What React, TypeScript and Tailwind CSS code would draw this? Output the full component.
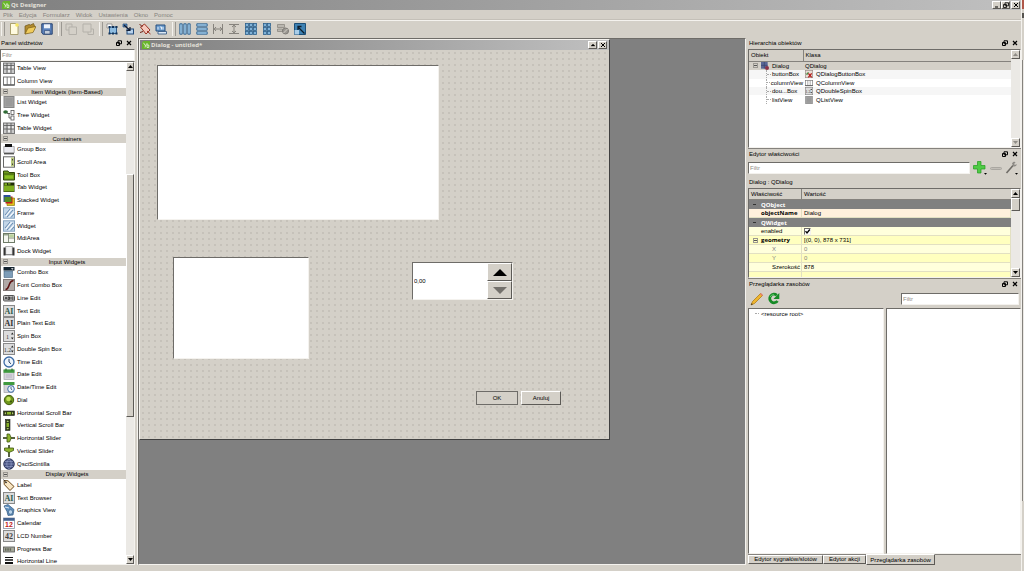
import { useState } from "react";
import type { ReactNode } from "react";

type WidgetGroup = { title?: string; items: { label: string; icon: ReactNode }[] };

const raised = "border border-t-white border-l-white border-r-[#5c5a56] border-b-[#5c5a56] bg-[#d4d0c8]";
const sunken = "border border-t-[#6e6c68] border-l-[#6e6c68] border-r-[#f4f2ee] border-b-[#f4f2ee] bg-white";

function Svg({ children, size = "w-3 h-3" }: { children: ReactNode; size?: string }) {
  return (
    <svg className={`${size} block shrink-0`} viewBox="0 0 12 12" fill="none" aria-hidden="true">
      {children}
    </svg>
  );
}

/* ---------- widget box icons ---------- */

const tile = <rect x=".5" y=".5" width="11" height="11" fill="#dcdcdc" stroke="#8a8a8a" />;

const tableIcon = (
  <Svg>
    <rect x=".5" y="1" width="11" height="10.5" fill="#c9c9c9" stroke="#777" />
    <path d="M1 3.5h10M1 7h10M4 1v10M8 1v10" stroke="#555" strokeWidth=".8" />
    <path d="M5 4.3h2v2H5zM9 4.3h1.6v2H9zM5 8h2v2H5z" fill="#eee" />
  </Svg>
);

const columnIcon = (
  <Svg>
    <rect x=".5" y="2" width="11" height="8" fill="#fff" stroke="#777" />
    <path d="M4.2 2v8M7.8 2v8" stroke="#777" strokeWidth=".9" />
    <path d="M.5 10h11" stroke="#555" strokeWidth="1.2" />
  </Svg>
);

const listIcon = (
  <Svg>
    <rect x="1" y=".5" width="10" height="11" fill="#a4a4a4" stroke="#858585" />
    <path d="M2.5 3h7M2.5 5h7M2.5 7h7M2.5 9h7" stroke="#8b8b8b" strokeWidth=".8" />
  </Svg>
);

const treeIcon = (
  <Svg>
    <ellipse cx="2.6" cy="3" rx="2.4" ry="1.7" fill="#2f6a35" />
    <path d="M4 4.5h3M6 4v5h2" stroke="#444" strokeWidth=".8" />
    <rect x="8" y="1.5" width="3" height="4" fill="#fff" stroke="#555" strokeWidth=".8" />
    <rect x="8" y="7" width="3" height="4" fill="#fff" stroke="#555" strokeWidth=".8" />
  </Svg>
);

const groupBoxIcon = (
  <Svg>
    <path d="M.8 3.5h10.4v6.5H.8z" fill="#e9e9ef" stroke="#999" strokeWidth=".8" />
    <path d="M1 10.6h10" stroke="#555" strokeWidth="1.6" />
    <path d="M2 1h7v3H2z" fill="#111" />
  </Svg>
);

const scrollAreaIcon = (
  <Svg>
    <rect x=".5" y=".8" width="11" height="10.4" fill="#fff" stroke="#666" />
    <path d="M8 1.5h3v9H8z" fill="#b9c77c" />
    <path d="M9.5 3v1.5M9.5 7.5V9" stroke="#444" />
  </Svg>
);

const folderIcon = (
  <Svg>
    <path d="M.5 2h4.5l1 1.5h5.5v7.5H.5z" fill="#6f9d1c" stroke="#31470b" />
    <path d="M1 5h10" stroke="#31470b" strokeWidth=".8" />
    <path d="M2 6.5h8v3H2z" fill="#8abf22" />
  </Svg>
);

const tabIcon = (
  <Svg>
    <path d="M.5 4V1.5H11.5v9.5H.5z" fill="#1f2c08" />
    <path d="M1 4.5h10v6H1z" fill="#7fae20" />
    <path d="M1.5 2.2h2.5v2H1.5zM5 2.2h2.5v1.3H5z" fill="#7fae20" />
  </Svg>
);

const stackedIcon = (
  <Svg>
    <path d="M4 4h7.5v7.5H4z" fill="#e0c21c" stroke="#7d6a00" strokeWidth=".6" />
    <path d="M2.5 2.5h7v7h-7z" fill="#bd1d1d" />
    <path d="M.5 1h7v7h-7z" fill="#2c4f96" />
    <path d="M1.5 3h7v5h-7z" fill="#528d22" />
  </Svg>
);

const frameIcon = (
  <Svg>
    <rect x=".5" y=".8" width="11" height="10.4" fill="#c3d6e8" stroke="#86a3bf" />
    <path d="M2 8l5-6M4 10l6-7M8 10.5l3-3.5" stroke="#6a8cb0" />
    <path d="M3 9l5.5-7M6 10.5l5-6" stroke="#fff" />
  </Svg>
);

const mdiIcon = (
  <Svg>
    <rect x=".5" y="1.5" width="11" height="9" fill="#f4f6ef" stroke="#6d7a66" />
    <path d="M5.5 1.5v9M5.5 6h6" stroke="#6d7a66" strokeWidth=".8" />
    <path d="M6.2 2.3h4.6v3H6.2z" fill="#b9d19b" />
    <path d="M1 2h4v1.5H1z" fill="#98a790" />
  </Svg>
);

const dockIcon = (
  <Svg>
    <path d="M.5 2.5h11v8H.5z" fill="#333" />
    <rect x="2.8" y="1.5" width="6.4" height="8" fill="#f1f1f1" stroke="#888" strokeWidth=".6" />
    <path d="M2.5 10.5h7" stroke="#ddd" />
  </Svg>
);

const comboIcon = (
  <Svg>
    <path d="M.5 1h11v3.6H.5z" fill="#14232f" />
    <path d="M8 2.2h2.6L9.3 3.8z" fill="#fff" />
    <path d="M1 5h8.5v6.5H1z" fill="#7e9db8" stroke="#476581" strokeWidth=".6" />
  </Svg>
);

const fontComboIcon = (
  <Svg>
    <rect x=".5" y=".5" width="11" height="11" fill="#b1a9a7" stroke="#837b79" />
    <path d="M2.5 10.5c2.5 0 3-3 4-5.5S8.5 1.5 10.5 1.8" stroke="#5b0f0f" strokeWidth="1.5" />
  </Svg>
);

const lineEditIcon = (
  <Svg>
    <rect x=".5" y="3.5" width="11" height="5.5" rx="1" fill="#bbb" stroke="#555" />
    <path d="M2 7.5l1-2.5 1 2.5M5.2 5v2.5h1.3V5zM8 5v2.5M9.8 4.5v3.5" stroke="#222" strokeWidth=".8" />
  </Svg>
);

function LetterIcon({ text, fill = "#333" }: { text: string; fill?: string }) {
  return (
    <Svg>
      {tile}
      <text x="6" y="9" textAnchor="middle" fontSize="8" fontWeight="700" fontFamily="Liberation Serif, serif" fill={fill}>
        {text}
      </text>
    </Svg>
  );
}

function SpinIcon({ text }: { text: string }) {
  return (
    <Svg>
      {tile}
      <text x="4.5" y="8.5" textAnchor="middle" fontSize="6" fontFamily="Liberation Serif, serif" fill="#333">
        {text}
      </text>
      <path d="M8 4.5l1.3-2 1.3 2zM8 7.5l1.3 2 1.3-2z" fill="#222" />
    </Svg>
  );
}

const clockIcon = (
  <Svg>
    <circle cx="6" cy="6" r="5" fill="#eef5fc" stroke="#3c6ba5" strokeWidth="1.3" />
    <path d="M6 2.8V6l2 1.8" stroke="#28456b" />
  </Svg>
);

const dateIcon = (
  <Svg>
    <rect x="1" y="2" width="10" height="9.5" fill="#d4d4d8" stroke="#a2a2a8" strokeWidth=".7" />
    <path d="M.5 1.5h11v3.3H.5z" fill="#3f9a3f" />
    <path d="M3 .5v2M9 .5v2" stroke="#1e5a1e" />
    <path d="M3 7h6M3 9h6" stroke="#b3a9c4" strokeWidth=".8" />
  </Svg>
);

const dateTimeIcon = (
  <Svg>
    <rect x="1" y="2" width="9" height="9.5" fill="#d4d4d8" stroke="#a2a2a8" strokeWidth=".7" />
    <path d="M.5 1h11v3H.5z" fill="#3f9a3f" />
    <circle cx="8" cy="8" r="3.3" fill="#eef5fc" stroke="#3c6ba5" />
    <path d="M8 6v2l1.3 1" stroke="#28456b" strokeWidth=".8" />
  </Svg>
);

const dialIcon = (
  <Svg>
    <circle cx="6" cy="6" r="4.7" fill="#6e961b" stroke="#435c0e" />
    <circle cx="5.5" cy="5" r="2.3" fill="#bfdf55" />
    <circle cx="8" cy="7.5" r="1" fill="#38500a" />
  </Svg>
);

const hScrollIcon = (
  <Svg>
    <rect x=".5" y="4" width="11" height="4.5" fill="#334016" stroke="#222" strokeWidth=".6" />
    <path d="M4 5h4v2.5H4z" fill="#88b02a" />
    <path d="M3 5L1.5 6.2 3 7.5zM9 5l1.5 1.2L9 7.5z" fill="#b9cf7c" />
  </Svg>
);

const vScrollIcon = (
  <Svg>
    <rect x="2.5" y=".5" width="4.5" height="11" fill="#334016" stroke="#222" strokeWidth=".6" />
    <path d="M3.5 4H6v4H3.5z" fill="#88b02a" />
    <path d="M3.5 3l1.2-1.5L6 3zM3.5 9l1.2 1.5L6 9z" fill="#b9cf7c" />
  </Svg>
);

const hSliderIcon = (
  <Svg>
    <path d="M0 6h12" stroke="#2c3b12" strokeWidth="1.6" />
    <path d="M4 2h2.5l1.8 4-1.8 4H4z" fill="#8fb52e" stroke="#3f5510" strokeWidth=".8" />
  </Svg>
);

const vSliderIcon = (
  <Svg>
    <path d="M6 0v12" stroke="#2c3b12" strokeWidth="1.6" />
    <path d="M1.5 3h9v2.5L6 7.5 1.5 5.5z" fill="#8fb52e" stroke="#3f5510" strokeWidth=".8" />
  </Svg>
);

const scintillaIcon = (
  <Svg>
    <circle cx="6" cy="6" r="5.3" fill="#47527f" stroke="#222a4d" strokeWidth=".8" />
    <path d="M1 6h10M6 1c-3 3-3 7 0 10M6 1c3 3 3 7 0 10M2 3.5h8M2 8.5h8" stroke="#9aa4cc" strokeWidth=".6" />
  </Svg>
);

const labelIcon = (
  <Svg>
    <path d="M1 1.5l4 .3 6 5.7-4 4L1.3 5.5z" fill="#f7e5c3" stroke="#6b4716" />
    <circle cx="3" cy="3.5" r=".8" fill="#222" />
    <path d="M.5 .5l2.5 3" stroke="#222" strokeWidth=".8" />
  </Svg>
);

const graphicsIcon = (
  <Svg>
    <path d="M1 2l4-1.5 6 5-1 5.5-5 .5-1-4z" fill="#5f8fbd" stroke="#33597f" strokeWidth=".7" />
    <circle cx="7.5" cy="8" r="2.2" fill="#b8d3ea" stroke="#33597f" strokeWidth=".6" />
    <path d="M2 3l4 1" stroke="#dbe9f5" />
  </Svg>
);

const calendarIcon = (
  <Svg>
    <rect x=".5" y="1" width="11" height="10.5" fill="#fff" stroke="#8b93a5" strokeWidth=".8" />
    <path d="M.5 1h11v2.8H.5z" fill="#43628f" />
    <text x="6" y="10.3" textAnchor="middle" fontSize="7" fontWeight="700" fontFamily="Liberation Sans, sans-serif" fill="#c01818">
      12
    </text>
  </Svg>
);

const progressIcon = (
  <Svg>
    <rect x=".5" y="4" width="11" height="5" fill="#a5a89a" stroke="#555" strokeWidth=".8" />
    <path d="M2 5.2h1.5v2.6H2zM4.3 5.2h1.5v2.6H4.3zM6.6 5.2h1.5v2.6H6.6z" fill="#62665a" />
  </Svg>
);

const hLineIcon = (
  <Svg>
    <path d="M2 2.5h8" stroke="#111" strokeWidth="1" />
    <path d="M2 5h8" stroke="#111" strokeWidth="1.5" />
    <path d="M2 8h8" stroke="#111" strokeWidth="2" />
  </Svg>
);

const widgetGroups: WidgetGroup[] = [
  {
    items: [
      { label: "Table View", icon: tableIcon },
      { label: "Column View", icon: columnIcon },
    ],
  },
  {
    title: "Item Widgets (Item-Based)",
    items: [
      { label: "List Widget", icon: listIcon },
      { label: "Tree Widget", icon: treeIcon },
      { label: "Table Widget", icon: tableIcon },
    ],
  },
  {
    title: "Containers",
    items: [
      { label: "Group Box", icon: groupBoxIcon },
      { label: "Scroll Area", icon: scrollAreaIcon },
      { label: "Tool Box", icon: folderIcon },
      { label: "Tab Widget", icon: tabIcon },
      { label: "Stacked Widget", icon: stackedIcon },
      { label: "Frame", icon: frameIcon },
      { label: "Widget", icon: frameIcon },
      { label: "MdiArea", icon: mdiIcon },
      { label: "Dock Widget", icon: dockIcon },
    ],
  },
  {
    title: "Input Widgets",
    items: [
      { label: "Combo Box", icon: comboIcon },
      { label: "Font Combo Box", icon: fontComboIcon },
      { label: "Line Edit", icon: lineEditIcon },
      { label: "Text Edit", icon: <LetterIcon text="AI" fill="#2f5a4c" /> },
      { label: "Plain Text Edit", icon: <LetterIcon text="AI" /> },
      { label: "Spin Box", icon: <SpinIcon text="1" /> },
      { label: "Double Spin Box", icon: <SpinIcon text="1.2" /> },
      { label: "Time Edit", icon: clockIcon },
      { label: "Date Edit", icon: dateIcon },
      { label: "Date/Time Edit", icon: dateTimeIcon },
      { label: "Dial", icon: dialIcon },
      { label: "Horizontal Scroll Bar", icon: hScrollIcon },
      { label: "Vertical Scroll Bar", icon: vScrollIcon },
      { label: "Horizontal Slider", icon: hSliderIcon },
      { label: "Vertical Slider", icon: vSliderIcon },
      { label: "QsciScintilla", icon: scintillaIcon },
    ],
  },
  {
    title: "Display Widgets",
    items: [
      { label: "Label", icon: labelIcon },
      { label: "Text Browser", icon: <LetterIcon text="AI" fill="#2f5a4c" /> },
      { label: "Graphics View", icon: graphicsIcon },
      { label: "Calendar", icon: calendarIcon },
      { label: "LCD Number", icon: <LetterIcon text="42" fill="#444" /> },
      { label: "Progress Bar", icon: progressIcon },
      { label: "Horizontal Line", icon: hLineIcon },
    ],
  },
];

/* ---------- toolbar ---------- */

const dotGrid = (cols: number[]) => (
  <Svg>
    {cols.map((x) =>
      [0.5, 4.5, 8.5].map((y) => (
        <rect key={`${x}-${y}`} x={x} y={y} width="3" height="3" fill="#7fb2d8" stroke="#2b5f8c" strokeWidth=".8" />
      ))
    )}
  </Svg>
);

const toolGroups: { width: string; tools: { name: string; icon: ReactNode }[] }[] = [
  {
    width: "w-[49px]",
    tools: [
      {
        name: "Nowy",
        icon: (
          <Svg>
            <path d="M2.5 .5h5l2.5 2.5v8.5H2.5z" fill="#fffbe0" stroke="#9b8f55" strokeWidth=".8" />
            <circle cx="9" cy="2" r="1.8" fill="#f5e663" />
          </Svg>
        ),
      },
      {
        name: "Otwórz",
        icon: (
          <Svg>
            <path d="M1 11V3l4-1.5L6.5 2l3-1.5L10.5 3v3z" fill="#b08a2e" stroke="#6d5417" strokeWidth=".7" />
            <path d="M1 11l3-6 8-1.5-3 6z" fill="#f0cb5c" stroke="#7a5e1a" strokeWidth=".7" />
          </Svg>
        ),
      },
      {
        name: "Zapisz",
        icon: (
          <Svg>
            <path d="M.8 .8h10.4v10.4H2L.8 10z" fill="#5d83bd" stroke="#25406e" />
            <path d="M3 1.3h6v4H3z" fill="#eef3fa" />
            <path d="M3.5 7.5h5.5V11H3.5z" fill="#c3cddb" stroke="#25406e" strokeWidth=".6" />
          </Svg>
        ),
      },
    ],
  },
  {
    width: "w-[33px]",
    tools: [
      {
        name: "Przesuń na wierzch",
        icon: (
          <Svg>
            <path d="M1 1h6v6H1z" stroke="#b4b1aa" />
            <path d="M4 4h7.5v7.5H4z" fill="#d4d0c8" stroke="#b4b1aa" />
          </Svg>
        ),
      },
      {
        name: "Przesuń na spód",
        icon: (
          <Svg>
            <path d="M6 6h5.5v5.5H6z" stroke="#b4b1aa" />
            <path d="M1 1h8v8H1z" fill="#d4d0c8" stroke="#b4b1aa" />
          </Svg>
        ),
      },
    ],
  },
  {
    width: "w-[65px]",
    tools: [
      {
        name: "Edycja widżetów",
        icon: (
          <Svg>
            <path d="M1 1h5v4H1z" fill="#fff" stroke="#777" strokeWidth=".7" />
            <rect x="3.5" y="4" width="7" height="6.5" fill="#8ebce0" stroke="#2c5b8c" />
            <path d="M2.5 3h2v2h-2zM9.5 3h2v2h-2zM2.5 9.5h2v2h-2zM9.5 9.5h2v2h-2zM6 3h2v2H6zM6 9.5h2v2H6z" fill="#123257" />
          </Svg>
        ),
      },
      {
        name: "Edycja sygnałów/slotów",
        icon: (
          <Svg>
            <path d="M1 1h4v3H1z" fill="#5e8fc4" stroke="#234a7a" strokeWidth=".7" />
            <rect x="5" y="6" width="6.5" height="5" fill="#b7d2ec" stroke="#234a7a" />
            <path d="M2 2l5.5 5M8 4v3.5H4.5" stroke="#111c33" strokeWidth="1.2" />
          </Svg>
        ),
      },
      {
        name: "Edycja skojarzonych etykiet",
        icon: (
          <Svg>
            <path d="M1.5 4l4-3L11 7l-4 4z" fill="#f5c9bd" stroke="#9b3222" />
            <path d="M1 9.5l3-1M.5 1l3 3" stroke="#6d1d12" />
            <path d="M8 8l3.5 3" stroke="#9b3222" />
          </Svg>
        ),
      },
      {
        name: "Edycja kolejności tabulacji",
        icon: (
          <Svg>
            <path d="M1 2h9v6H1z" fill="#6f9fd0" stroke="#28507f" />
            <path d="M3 8.5h8.5V11H3z" fill="#dce8f4" stroke="#28507f" strokeWidth=".8" />
            <path d="M3 4v2.5M5 4h1.5v2.5M8 4v2.5" stroke="#fff" strokeWidth=".8" />
          </Svg>
        ),
      },
    ],
  },
  {
    width: "w-[131px]",
    tools: [
      {
        name: "Rozmieść poziomo",
        icon: (
          <Svg>
            <path d="M.8 .8h2.4v10.4H.8zM4.8 .8h2.4v10.4H4.8zM8.8 .8h2.4v10.4H8.8z" fill="#a5cfee" stroke="#2b5f8c" strokeWidth=".9" />
          </Svg>
        ),
      },
      {
        name: "Rozmieść pionowo",
        icon: (
          <Svg>
            <path d="M.8 .8h10.4v2.4H.8zM.8 4.8h10.4v2.4H.8zM.8 8.8h10.4v2.4H.8z" fill="#a5cfee" stroke="#2b5f8c" strokeWidth=".9" />
          </Svg>
        ),
      },
      {
        name: "Rozmieść poziomo w splitterze",
        icon: (
          <Svg>
            <path d="M1.5 1v10M10.5 1v10M2 6h8M4 4L2.2 6 4 8M8 4l1.8 2L8 8" stroke="#86837d" />
          </Svg>
        ),
      },
      {
        name: "Rozmieść pionowo w splitterze",
        icon: (
          <Svg>
            <path d="M1 1.5h10M1 10.5h10M6 2v8M4 4l2-1.8L8 4M4 8l2 1.8L8 8" stroke="#86837d" />
          </Svg>
        ),
      },
      { name: "Rozmieść w siatce", icon: dotGrid([0.5, 4.5, 8.5]) },
      { name: "Rozmieść w formularzu", icon: dotGrid([2.5, 6.5]) },
      {
        name: "Usuń rozmieszczenie",
        icon: (
          <Svg>
            <path d="M.5 1.5h7v3h-7zM.5 6h5v2.5h-5z" fill="#bab7b0" stroke="#8b8882" strokeWidth=".8" />
            <circle cx="8.5" cy="8" r="3" fill="#9c9993" stroke="#7d7a75" />
            <path d="M6.5 10l4-4" stroke="#d4d0c8" />
          </Svg>
        ),
      },
      {
        name: "Dopasuj rozmiar",
        icon: (
          <Svg>
            <path d="M.5 .5h11v11H.5z" fill="#3f82b3" stroke="#1c4f78" />
            <path d="M.5 7h4.5v4.5H.5z" fill="#a9cde8" />
            <path d="M10.5 10.5L4 4M4 7V3.5h3.5" stroke="#0d1d2c" strokeWidth="1.3" />
          </Svg>
        ),
      },
    ],
  },
];

const menus = ["Plik", "Edycja", "Formularz", "Widok", "Ustawienia", "Okno", "Pomoc"];

function QtLogo() {
  return (
    <svg className="w-2 h-2 block shrink-0" viewBox="0 0 8 8" fill="none" aria-hidden="true">
      <path d="M1.5 0H8v6.5L6.5 8H0V1.5z" fill="#69b52b" />
      <path d="M1.5 1.8l2 3 .8-1.5M3.5 4.8L3 6.5M5 2v4.5M5 4h1.8v2.5H5" stroke="#e9f5dc" strokeWidth=".8" />
    </svg>
  );
}

function WindowButton({ kind }: { kind: "min" | "restore" | "close" | "up" }) {
  return (
    <button aria-label={kind} className={`flex h-[8px] w-[9px] items-center justify-center ${raised}`}>
      <svg className="w-[6px] h-[6px]" viewBox="0 0 6 6" fill="none" stroke="#000">
        {kind === "min" && <path d="M1 5h3" />}
        {kind === "restore" && <path d="M2 .8h3.5v3H2zM.5 2.5h3v3h-3z" strokeWidth=".8" />}
        {kind === "close" && <path d="M1 1l4 4M5 1L1 5" />}
        {kind === "up" && <path d="M1 4l2-2 2 2z" fill="#000" strokeWidth=".3" />}
      </svg>
    </button>
  );
}

function DockTitle({ title }: { title: string }) {
  return (
    <div className="flex h-[10px] shrink-0 items-center justify-between pl-px pr-[3px]">
      <h2>{title}</h2>
      <div className="flex gap-[4px]">
        <button aria-label="Odczep">
          <svg className="block w-[6px] h-[6px]" viewBox="0 0 6 6" fill="none" stroke="#000">
            <path d="M2 .8h3.5v3H2zM.5 2.5h3v3h-3z" />
          </svg>
        </button>
        <button aria-label="Zamknij">
          <svg className="block w-[6px] h-[6px]" viewBox="0 0 6 6" fill="none" stroke="#000">
            <path d="M1 1l4 4M5 1L1 5" strokeWidth="1.2" />
          </svg>
        </button>
      </div>
    </div>
  );
}

function ArrowButton({ dir, disabled = false }: { dir: "up" | "down"; disabled?: boolean }) {
  return (
    <button aria-label={dir} disabled={disabled} className={`flex h-[9px] w-full shrink-0 items-center justify-center ${raised}`}>
      <svg className="w-[5px] h-[3px]" viewBox="0 0 5 3" fill={disabled ? "#8f8c86" : "#000"}>
        <path d={dir === "up" ? "M0 3L2.5 0 5 3z" : "M0 0h5L2.5 3z"} />
      </svg>
    </button>
  );
}

function Expander() {
  return (
    <button aria-label="Zwiń" className="flex h-[5px] w-[5px] shrink-0 items-center justify-center border border-[#9b9892]">
      <span className="h-px w-[3px] bg-[#555]" />
    </button>
  );
}

function WidgetBox() {
  const [filter, setFilter] = useState("");
  return (
    <aside className="flex w-[138px] shrink-0 flex-col border-r border-[#f4f2ee] pr-[2px]">
      <DockTitle title="Panel widżetów" />
      <input
        aria-label="Filtr widżetów"
        placeholder="Filtr"
        value={filter}
        onChange={(e) => setFilter(e.target.value)}
        className={`mt-px h-[12px] w-full shrink-0 px-px placeholder:text-[#8f8c86] ${sunken}`}
      />
      <div className={`flex min-h-0 flex-1 overflow-hidden ${sunken}`}>
        <div className="min-w-0 flex-1 overflow-hidden">
          <div className="flex h-[506px] flex-col">
            {widgetGroups.map((group, i) => (
              <WidgetSection key={i} group={group} />
            ))}
          </div>
        </div>
        <div className="flex w-[8px] shrink-0 flex-col bg-[#ebe9e5]">
          <ArrowButton dir="up" />
          <div className="flex-[104]" />
          <div className={`flex-[242] ${raised}`} />
          <div className="flex-[139]" />
          <ArrowButton dir="down" />
        </div>
      </div>
    </aside>
  );
}

function WidgetSection({ group }: { group: WidgetGroup }) {
  return (
    <>
      {group.title && (
        <div className="flex min-h-0 flex-[2] items-center bg-[#d4d0c8] pl-[2px]">
          <Expander />
          <h3 className="flex-1 text-center">{group.title}</h3>
        </div>
      )}
      {group.items.map((item) => (
        <div key={item.label} className="flex min-h-0 flex-[3] items-center gap-[2px] pl-[2px]">
          {item.icon}
          <span className="whitespace-nowrap">{item.label}</span>
        </div>
      ))}
    </>
  );
}

function FormWindow() {
  const [value, setValue] = useState("0,00");
  return (
    <section className="flex h-[401px] w-[471px] flex-col border border-t-[#f4f2ee] border-l-[#f4f2ee] border-r-[#404040] border-b-[#404040] bg-[#d4d0c8]">
      <div className="flex h-[10px] shrink-0 items-center gap-px bg-linear-to-r from-[#808080] to-[#c0c0c0] pl-[2px] pr-[2px]">
        <QtLogo />
        <h2 className="flex-1 font-['Open_Sans',sans-serif] font-bold text-[#e4e1da]">Dialog - untitled*</h2>
        <WindowButton kind="up" />
        <WindowButton kind="close" />
      </div>
      {/* free canvas: the widgets sit where they were dropped */}
      <div className="relative flex-1 bg-[radial-gradient(circle_at_center,#bcb8b0_0,#bcb8b0_0.5px,transparent_1px)] bg-[size:6px_6px]">
        <div className={`absolute left-[17px] top-[15px] h-[155px] w-[282px] ${sunken}`} />
        <div className={`absolute left-[33px] top-[207px] h-[102px] w-[136px] ${sunken}`} />
        <div className={`absolute left-[272px] top-[212px] flex h-[38px] w-[101px] ${sunken}`}>
          <input
            aria-label="Wartość"
            value={value}
            onChange={(e) => setValue(e.target.value)}
            className="min-w-0 flex-1 bg-white px-px"
          />
          <div className="flex w-[25px] flex-col">
            <button aria-label="Zwiększ" className={`flex flex-1 items-center justify-center ${raised}`}>
              <svg className="w-[14px] h-[7px]" viewBox="0 0 14 7">
                <path d="M0 7L7 0l7 7z" fill="#000" />
              </svg>
            </button>
            <button aria-label="Zmniejsz" className={`flex flex-1 items-center justify-center ${raised}`}>
              <svg className="w-[14px] h-[7px]" viewBox="0 0 14 7">
                <path d="M0 0h14L7 7z" fill="#74716c" />
              </svg>
            </button>
          </div>
        </div>
        <div className="absolute left-[336px] top-[341px] flex gap-[3px]">
          <button className={`h-[14px] w-[42px] outline outline-[#6e6c68] -outline-offset-1 ${raised}`}>OK</button>
          <button className={`h-[14px] w-[40px] ${raised}`}>Anuluj</button>
        </div>
      </div>
    </section>
  );
}

const objects = [
  {
    name: "buttonBox",
    cls: "QDialogButtonBox",
    icon: (
      <Svg size="w-2 h-2">
        <rect x=".5" y=".5" width="11" height="11" fill="#e9dcd6" stroke="#9a8a84" />
        <path d="M1.5 5l1.5 2 2-4" stroke="#3b8b3b" strokeWidth="1.5" />
        <path d="M5 5l5 6M10 5l-5 6" stroke="#b51c1c" strokeWidth="2" />
      </Svg>
    ),
  },
  { name: "columnView", cls: "QColumnView", icon: columnIcon },
  { name: "dou...Box", cls: "QDoubleSpinBox", icon: <SpinIcon text="1.2" /> },
  { name: "listView", cls: "QListView", icon: listIcon },
];

function ObjectInspector() {
  return (
    <section className="flex h-[110px] shrink-0 flex-col">
      <DockTitle title="Hierarchia obiektów" />
      <div className={`mt-px flex min-h-0 flex-1 ${sunken}`}>
        <div className="flex-1">
          <table className="h-[54px] w-full table-fixed border-collapse leading-[8px]">
            <thead>
              <tr className="h-[11px] bg-[#d4d0c8] text-left">
                <th className="w-[54px] border-b border-r border-[#85827d] pl-[2px] font-normal">Obiekt</th>
                <th className="border-b border-[#85827d] pl-[2px] font-normal">Klasa</th>
              </tr>
            </thead>
            <tbody>
              <tr className="bg-[#d4d0c8]">
                <td>
                  <div className="flex items-center gap-[3px] pl-[4px]">
                    <Expander />
                    <Svg size="w-2 h-2">
                      <path d="M0 0h10v10H0z" fill="#5a6796" />
                      <path d="M0 5h10M5 0v10" stroke="#39436c" />
                      <circle cx="9" cy="9" r="3" fill="#8c3348" />
                    </Svg>
                    Dialog
                  </div>
                </td>
                <td className="pl-[2px]">QDialog</td>
              </tr>
              {objects.map((o) => (
                <tr key={o.name} className="odd:bg-white even:bg-[#f6f6f6]">
                  <td>
                    <div className="ml-[17px] flex items-center gap-px border-l border-dotted border-[#aaa]">
                      <span className="w-[4px] border-t border-dotted border-[#aaa]" />
                      {o.name}
                    </div>
                  </td>
                  <td className="pl-[2px]">
                    <div className="flex items-center gap-[2px]">
                      <span className="flex h-[8px] w-[9px] items-center [&>svg]:h-2 [&>svg]:w-2">{o.icon}</span>
                      {o.cls}
                    </div>
                  </td>
                </tr>
              ))}
            </tbody>
          </table>
        </div>
        <div className="flex w-[9px] shrink-0 flex-col justify-between bg-[#ebe9e5]">
          <ArrowButton dir="up" disabled />
          <ArrowButton dir="down" disabled />
        </div>
      </div>
    </section>
  );
}

function GroupRow({ name }: { name: string }) {
  return (
    <tr className="h-[9px] bg-[#808080] text-white">
      <th colSpan={2} className="text-left font-['Open_Sans',sans-serif] font-bold">
        <div className="flex items-center gap-[5px] pl-[4px]">
          <span className="h-px w-[3px] bg-[#333]" />
          {name}
        </div>
      </th>
    </tr>
  );
}

const propCell = "border-b border-r border-[#e2e0c2]";

function PropertyEditor() {
  const [filter, setFilter] = useState("");
  const [enabled, setEnabled] = useState(true);
  return (
    <section className="flex h-[130px] shrink-0 flex-col border-t border-[#85827d]">
      <DockTitle title="Edytor właściwości" />
      <div className="flex h-[18px] shrink-0 items-center gap-[3px] pr-[3px]">
        <input
          aria-label="Filtr właściwości"
          placeholder="Filtr"
          value={filter}
          onChange={(e) => setFilter(e.target.value)}
          className={`h-[12px] min-w-0 flex-1 px-px placeholder:text-[#8f8c86] ${sunken}`}
        />
        <button aria-label="Dodaj właściwość">
          <svg className="block w-[14px] h-[14px]" viewBox="0 0 14 14">
            <path d="M4.5 .5h3.5v4h4V8H8v4H4.5V8H.5V4.5h4z" fill="#4fcb45" stroke="#239b20" strokeWidth=".7" />
            <path d="M11 12h3l-1.5 1.8z" fill="#000" />
          </svg>
        </button>
        <button aria-label="Usuń właściwość" className="flex h-[14px] w-[12px] items-center">
          <span className="h-[3px] w-full rounded-sm border border-[#aaa7a1] bg-[#c2beb7]" />
        </button>
        <button aria-label="Konfiguruj">
          <svg className="block w-[13px] h-[14px]" viewBox="0 0 13 14" fill="none">
            <path d="M1.5 12L8 4.5" stroke="#6f6c67" strokeWidth="1.6" />
            <path d="M7 2.5c1-2 3-2 3.5-1L9 3l1 1 1.5-1c.5 1.5-1 3-3 2.5z" fill="#8d8a85" />
            <path d="M10 12h3l-1.5 1.8z" fill="#000" />
          </svg>
        </button>
      </div>
      <p className="h-[11px] shrink-0 pl-px leading-[11px]">Dialog : QDialog</p>
      <div className={`flex min-h-0 flex-1 overflow-hidden ${sunken}`}>
        <div className="min-w-0 flex-1 overflow-hidden">
          <table className="w-full table-fixed border-separate border-spacing-0 leading-[8px]">
            <thead>
              <tr className="h-[11px] bg-[#d4d0c8] text-left">
                <th className="w-[53px] border-b border-r border-[#85827d] pl-[2px] font-normal">Właściwość</th>
                <th className="border-b border-[#85827d] pl-[2px] font-normal">Wartość</th>
              </tr>
            </thead>
            <tbody>
              <GroupRow name="QObject" />
              <tr className="h-[9px] bg-[#fff0dc]">
                <td className={`pl-[12px] font-['Open_Sans',sans-serif] font-bold ${propCell}`}>objectName</td>
                <td className={`pl-[2px] ${propCell}`}>Dialog</td>
              </tr>
              <GroupRow name="QWidget" />
              <tr className="h-[9px] bg-[#ffffdc]">
                <td className={`pl-[12px] ${propCell}`}>
                  <label htmlFor="enabled">enabled</label>
                </td>
                <td className={`pl-[2px] ${propCell}`}>
                  <div className="relative h-[7px] w-[7px]">
                    <input
                      id="enabled"
                      type="checkbox"
                      checked={enabled}
                      onChange={(e) => setEnabled(e.target.checked)}
                      className={`block h-[7px] w-[7px] appearance-none ${sunken}`}
                    />
                    {enabled && (
                      <svg className="pointer-events-none absolute inset-0 h-[7px] w-[7px]" viewBox="0 0 7 7" fill="none">
                        <path d="M1.5 3.2L3 5l2.8-3.5" stroke="#000" strokeWidth="1.3" />
                      </svg>
                    )}
                  </div>
                </td>
              </tr>
              <tr className="h-[9px] bg-[#ffffbf]">
                <td className={`font-['Open_Sans',sans-serif] font-bold ${propCell}`}>
                  <div className="flex items-center gap-[3px] pl-[4px]">
                    <Expander />
                    geometry
                  </div>
                </td>
                <td className={`pl-[2px] ${propCell}`}>[(0, 0), 878 x 731]</td>
              </tr>
              <tr className="h-[9px] bg-[#ffffdc] text-[#85827d]">
                <td className={`pl-[23px] ${propCell}`}>X</td>
                <td className={`pl-[2px] ${propCell}`}>0</td>
              </tr>
              <tr className="h-[9px] bg-[#ffffbf] text-[#85827d]">
                <td className={`pl-[23px] ${propCell}`}>Y</td>
                <td className={`pl-[2px] ${propCell}`}>0</td>
              </tr>
              <tr className="h-[9px] bg-[#ffffdc]">
                <td className={`pl-[23px] ${propCell}`}>Szerokość</td>
                <td className={`pl-[2px] ${propCell}`}>878</td>
              </tr>
              <tr className="h-[9px] bg-[#ffffbf]">
                <td className={propCell} />
                <td className={propCell} />
              </tr>
            </tbody>
          </table>
        </div>
        <div className="flex w-[9px] shrink-0 flex-col bg-[#ebe9e5]">
          <ArrowButton dir="up" />
          <div className={`h-[13px] ${raised}`} />
          <div className="flex-1" />
          <ArrowButton dir="down" />
        </div>
      </div>
    </section>
  );
}

function ResourceBrowser() {
  const [filter, setFilter] = useState("");
  return (
    <section className="flex min-h-0 flex-1 flex-col border-t border-[#85827d]">
      <DockTitle title="Przeglądarka zasobów" />
      <div className="flex h-[19px] shrink-0 items-center gap-[3px] pl-[2px] pr-[2px]">
        <button aria-label="Edytuj zasoby">
          <svg className="block w-[14px] h-[14px]" viewBox="0 0 14 14">
            <path d="M1 13l1.5-3.5L10.5 1.5l2 2L4.5 11.5z" fill="#eeb52f" stroke="#a8720f" strokeWidth=".7" />
            <path d="M10 2l1-1 2 2-1 1z" fill="#df7b6f" />
            <path d="M1 13l.7-1.8L2.8 12.3z" fill="#222" />
          </svg>
        </button>
        <button aria-label="Przeładuj">
          <svg className="block w-[13px] h-[13px]" viewBox="0 0 13 13" fill="none">
            <path d="M9.8 3.2A4.3 4.3 0 1 0 10.5 9" stroke="#168a26" strokeWidth="2.8" />
            <path d="M12.3 1v6H6.5z" fill="#168a26" />
            <path d="M3 5a4 4 0 0 1 4-2.3" stroke="#6fd476" strokeWidth=".9" />
          </svg>
        </button>
        <input
          aria-label="Filtr zasobów"
          placeholder="Filtr"
          value={filter}
          onChange={(e) => setFilter(e.target.value)}
          className={`ml-auto h-[12px] w-[118px] px-px placeholder:text-[#8f8c86] ${sunken}`}
        />
      </div>
      <div className="flex min-h-0 flex-1 gap-[2px]">
        <div className={`w-1/2 ${sunken}`}>
          <div className="flex h-[9px] items-center gap-[2px] pl-[6px]">
            <span className="w-[4px] border-t border-dotted border-[#aaa]" />
            &lt;resource root&gt;
          </div>
        </div>
        <div className={`w-1/2 ${sunken}`} />
      </div>
      <div role="tablist" className="flex h-[11px] shrink-0 whitespace-nowrap border-t border-[#85827d]">
        <button role="tab" aria-selected="false" className={`h-[9px] w-[75px] leading-[7px] ${raised}`}>
          Edytor sygnałów/slotów
        </button>
        <button role="tab" aria-selected="false" className={`h-[9px] w-[43px] leading-[7px] ${raised}`}>
          Edytor akcji
        </button>
        <button role="tab" aria-selected="true" className={`-mt-px h-[11px] w-[69px] ${raised}`}>
          Przeglądarka zasobów
        </button>
      </div>
    </section>
  );
}

export default function App() {
  return (
    <div className="flex h-screen overflow-hidden bg-[#d4d0c8] font-['Liberation_Sans',sans-serif] text-[6px] leading-[8px] text-[#000000]">
      <div className="flex min-w-0 flex-1 flex-col">
        <header className="shrink-0">
          <div className="flex h-[10px] items-center gap-px bg-linear-to-r from-[#808080] to-[#c0c0c0] pl-[2px] pr-px">
            <QtLogo />
            <h1 className="flex-1 font-['Open_Sans',sans-serif] font-bold text-[#e4e1da]">Qt Designer</h1>
            <div className="flex">
              <WindowButton kind="min" />
              <WindowButton kind="restore" />
            </div>
            <WindowButton kind="close" />
          </div>
          <nav className="flex h-[10px] items-center gap-[6px] border-b border-[#c4c0b8] pl-[3px] text-[#85827d]">
            {menus.map((m) => (
              <button key={m}>{m}</button>
            ))}
          </nav>
          <div className="flex h-[18px] items-center border-t border-[#f4f2ee] pb-px pl-px">
            {toolGroups.map((g) => (
              <div key={g.width} className="flex items-center pr-[3px]">
                <span className="mr-px h-[14px] w-[4px] border-x border-l-[#f4f2ee] border-r-[#9b9892]" />
                <div className={`flex justify-around ${g.width}`}>
                  {g.tools.map((t) => (
                    <button key={t.name} aria-label={t.name} title={t.name}>
                      {t.icon}
                    </button>
                  ))}
                </div>
              </div>
            ))}
          </div>
        </header>

        <div className="flex min-h-0 flex-1">
          <WidgetBox />
          <main className="min-w-0 flex-1 overflow-hidden border border-t-[#6e6c68] border-l-[#6e6c68] border-r-[#f4f2ee] border-b-[#f4f2ee] bg-[#808080]">
            <FormWindow />
          </main>
          <aside className="ml-[2px] flex w-[273px] shrink-0 flex-col">
            <ObjectInspector />
            <PropertyEditor />
            <ResourceBrowser />
          </aside>
        </div>
        <footer className="h-[6px] shrink-0" />
      </div>
      {/* edge of the next window */}
      <div className="flex w-[3px] shrink-0 flex-col border-l border-[#f4f2ee]">
        <div className="h-[9px] bg-[#b0584a]" />
        <div className="mt-[4px] h-[5px] bg-[#55534f]" />
        <div className="mt-[42px] flex-1 border-l border-[#85827d] bg-[#ebe9e5]" />
        <div className="h-[70px]" />
      </div>
    </div>
  );
}
